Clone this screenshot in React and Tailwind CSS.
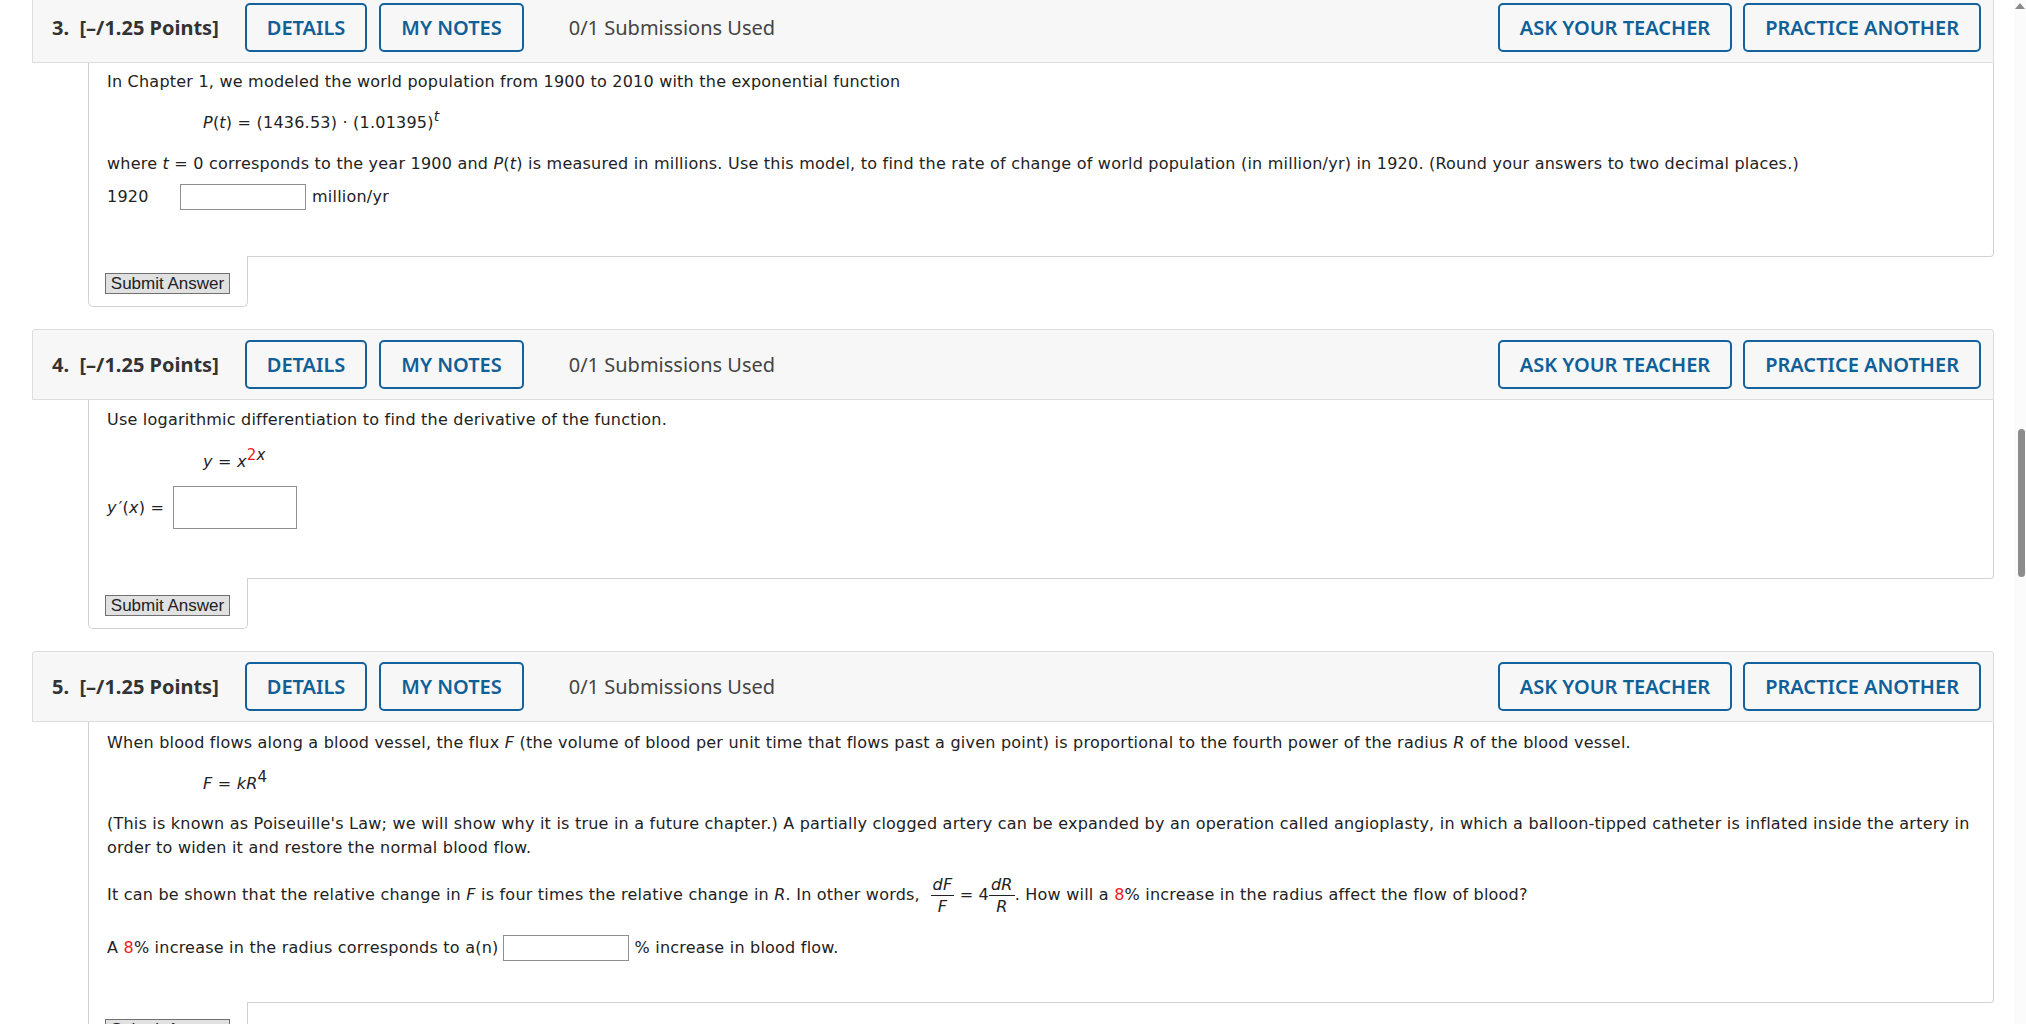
const body = "font-['DejaVu_Sans',Verdana,sans-serif] text-[16px] leading-[24px] tracking-[0.22px] text-[#222]";

function Btn({ children }) {
  return (
    <button className="h-[49px] rounded-[5px] border-2 border-[#14629b] bg-[#f7f7f7] px-[20px] text-[20px] font-semibold text-[#0f5f98]">
      {children}
    </button>
  );
}

function Header({ num }) {
  return (
    <div className="flex h-[71px] items-center rounded-t-[3px] border border-[#dddddd] bg-[#f7f7f7] pl-[19px] pr-[12px] font-['Noto_Sans','Open_Sans',sans-serif]">
      <span className="text-[20px] font-bold text-[#333]">
        {num}.&nbsp; [–/1.25 Points]
      </span>
      <div className="ml-[26px] flex gap-[12px]">
        <Btn>DETAILS</Btn>
        <Btn>MY NOTES</Btn>
      </div>
      <span className="ml-[45px] text-[20px] text-[#444]">0/1 Submissions Used</span>
      <div className="ml-auto flex gap-[11px]">
        <Btn>ASK YOUR TEACHER</Btn>
        <Btn>PRACTICE ANOTHER</Btn>
      </div>
    </div>
  );
}

function Box({ children, className }) {
  return (
    <div className={`ml-[56px] rounded-br-[4px] border-x border-b border-[#d2d2d2] bg-white pl-[18px] pr-4 ${body} ${className}`}>
      {children}
    </div>
  );
}

function SubmitTab() {
  return (
    <div className="relative z-10 -mt-px ml-[56px] h-[51px] w-[160px] rounded-b-[5px] border-x border-b border-[#d2d2d2] bg-white pl-[16px] pt-[17px]">
      <button className="block h-[21px] w-[125px] border border-[#707070] bg-[#e1e1e1] font-['Liberation_Sans',Arial,sans-serif] text-[17px] leading-none text-[#222]">
        Submit Answer
      </button>
    </div>
  );
}

function Input({ className }) {
  return <span className={`inline-block border border-[#8f8f8f] bg-white ${className}`} />;
}

function Frac({ top, bottom }) {
  return (
    <span className="inline-flex flex-col items-center align-middle text-[16px] leading-[21px]">
      <span className="px-[2px] italic">{top}</span>
      <span className="w-full border-t border-[#222] text-center italic">{bottom}</span>
    </span>
  );
}

export default function App() {
  return (
    <div className="flex h-screen overflow-hidden bg-white">
      <div className="flex-1 pl-[32px] pr-[20px]">
        <div className="-mt-[8px]">
          {/* question 3 */}
          <Header num={3} />
          <Box className="pt-[7px] pb-[46px]">
            <p>In Chapter 1, we modeled the world population from 1900 to 2010 with the exponential function</p>
            <p className="mt-[17px] pl-[96px]">
              <i>P</i>(<i>t</i>) = (1436.53) · (1.01395)<sup className="text-[14px]"><i>t</i></sup>
            </p>
            <p className="mt-[17px]">
              where <i>t</i> = 0 corresponds to the year 1900 and <i>P</i>(<i>t</i>) is measured in millions. Use this model, to find the rate of change of world population (in million/yr) in 1920. (Round your answers to two decimal places.)
            </p>
            <div className="mt-[8px] flex h-[26px] items-center">
              <span className="w-[73px]">1920</span>
              <Input className="h-[26px] w-[126px]" />
              <span className="ml-[6px]">million/yr</span>
            </div>
          </Box>
          <SubmitTab />

          {/* question 4 */}
          <div className="mt-[22px]">
            <Header num={4} />
            <Box className="pt-[8px] pb-[49px]">
              <p>Use logarithmic differentiation to find the derivative of the function.</p>
              <p className="mt-[18px] pl-[96px]">
                <i>y</i> = <i>x</i>
                <sup className="text-[15px]">
                  <span className="text-[#ee1c1c]">2</span>
                  <i>x</i>
                </sup>
              </p>
              <div className="mt-[12px] flex h-[43px] items-center">
                <span className="w-[66px]">
                  <i>y</i><span className="ml-[2px]">′</span>(<i>x</i>) =
                </span>
                <Input className="h-[43px] w-[124px]" />
              </div>
            </Box>
            <SubmitTab />
          </div>

          {/* question 5 */}
          <div className="mt-[22px]">
            <Header num={5} />
            <Box className="pt-[9px] pb-[41px]">
              <p>
                When blood flows along a blood vessel, the flux <i>F</i> (the volume of blood per unit time that flows past a given point) is proportional to the fourth power of the radius <i>R</i> of the blood vessel.
              </p>
              <p className="mt-[17px] pl-[96px]">
                <i>F</i> = <i>kR</i>
                <sup className="text-[15px]">4</sup>
              </p>
              <p className="mt-[16px]">
                (This is known as Poiseuille's Law; we will show why it is true in a future chapter.) A partially clogged artery can be expanded by an operation called angioplasty, in which a balloon-tipped catheter is inflated inside the artery in
                <br />
                order to widen it and restore the normal blood flow.
              </p>
              <p className="mt-[11px] flex h-[48px] items-center whitespace-pre">
                <span>It can be shown that the relative change in <i>F</i> is four times the relative change in <i>R</i>. In other words,  </span>
                <Frac top="dF" bottom="F" />
                <span> = 4</span>
                <Frac top="dR" bottom="R" />
                <span>. How will a <span className="text-[#ee1c1c]">8</span>% increase in the radius affect the flow of blood?</span>
              </p>
              <div className="mt-[16px] flex h-[26px] items-center">
                <span>
                  A <span className="text-[#ee1c1c]">8</span>% increase in the radius corresponds to a(n)
                </span>
                <Input className="ml-[5px] h-[26px] w-[126px]" />
                <span className="ml-[5px]">% increase in blood flow.</span>
              </div>
            </Box>
            <SubmitTab />
          </div>
        </div>
      </div>

      {/* scrollbar */}
      <div className="flex w-[12px] flex-col bg-[#fbfbfb]">
        <svg width="12" height="10" viewBox="0 0 12 10" className="mt-[2px]">
          <path d="M6 1 L11 7 L1 7 Z" fill="#8a8a8a" />
        </svg>
        <div className="ml-[4px] mt-[417px] h-[148px] w-[7px] rounded-full bg-[#8c8c8c]" />
      </div>
    </div>
  );
}
